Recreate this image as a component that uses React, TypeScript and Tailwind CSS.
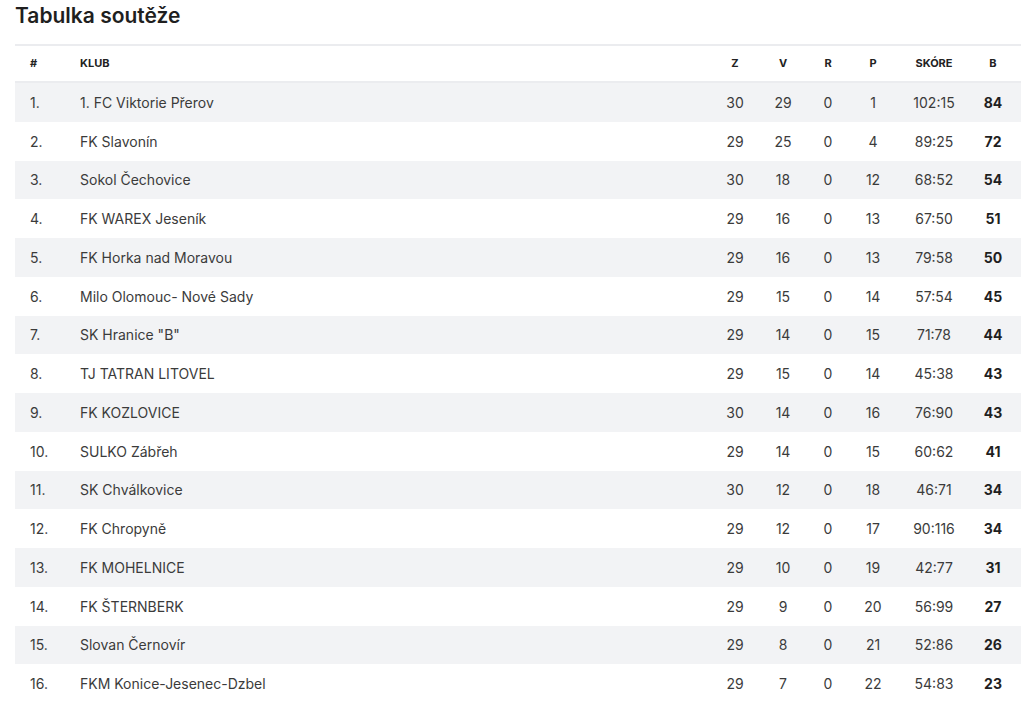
import React from 'react';

type Row = [string, number, number, number, number, string, number];

const rows: Row[] = [
  ['1. FC Viktorie Přerov', 30, 29, 0, 1, '102:15', 84],
  ['FK Slavonín', 29, 25, 0, 4, '89:25', 72],
  ['Sokol Čechovice', 30, 18, 0, 12, '68:52', 54],
  ['FK WAREX Jeseník', 29, 16, 0, 13, '67:50', 51],
  ['FK Horka nad Moravou', 29, 16, 0, 13, '79:58', 50],
  ['Milo Olomouc- Nové Sady', 29, 15, 0, 14, '57:54', 45],
  ['SK Hranice "B"', 29, 14, 0, 15, '71:78', 44],
  ['TJ TATRAN LITOVEL', 29, 15, 0, 14, '45:38', 43],
  ['FK KOZLOVICE', 30, 14, 0, 16, '76:90', 43],
  ['SULKO Zábřeh', 29, 14, 0, 15, '60:62', 41],
  ['SK Chválkovice', 30, 12, 0, 18, '46:71', 34],
  ['FK Chropyně', 29, 12, 0, 17, '90:116', 34],
  ['FK MOHELNICE', 29, 10, 0, 19, '42:77', 31],
  ['FK ŠTERNBERK', 29, 9, 0, 20, '56:99', 27],
  ['Slovan Černovír', 29, 8, 0, 21, '52:86', 26],
  ['FKM Konice-Jesenec-Dzbel', 29, 7, 0, 22, '54:83', 23],
];

const cols = 'grid grid-cols-[50px_1fr_48px_48px_42px_48px_74px_44px] pr-[6px] items-center';

export default function App() {
  return (
    <div className="min-h-[706px] bg-white font-['Inter',sans-serif] text-[#3b3b3b]">
      <h2 className="pl-[15px] pt-[4px] text-[21px] font-semibold leading-[24px] text-[#1f1f1f]">
        Tabulka soutěže
      </h2>

      <div className="ml-[15px] mr-[3px] mt-[16px]">
        {/* header */}
        <div className={`${cols} h-[39px] border-t-2 border-b-2 border-[#ebecef] text-[11px] font-bold uppercase text-[#222]`}>
          <div className="pl-[15px]">#</div>
          <div className="pl-[15px]">Klub</div>
          <div className="text-center">Z</div>
          <div className="text-center">V</div>
          <div className="text-center">R</div>
          <div className="text-center">P</div>
          <div className="text-center">Skóre</div>
          <div className="text-center">B</div>
        </div>

        {rows.map((r, i) => (
          <div
            key={i}
            className={`${cols} h-[38.75px] text-[14px] ${i % 2 === 0 ? 'bg-[#f2f3f5]' : 'bg-white'}`}
          >
            <div className="pl-[15px]">{i + 1}.</div>
            <div className="pl-[15px]">{r[0]}</div>
            <div className="text-center">{r[1]}</div>
            <div className="text-center">{r[2]}</div>
            <div className="text-center">{r[3]}</div>
            <div className="text-center">{r[4]}</div>
            <div className="text-center">{r[5]}</div>
            <div className="text-center font-bold text-[#1f1f1f]">{r[6]}</div>
          </div>
        ))}
      </div>
    </div>
  );
}
